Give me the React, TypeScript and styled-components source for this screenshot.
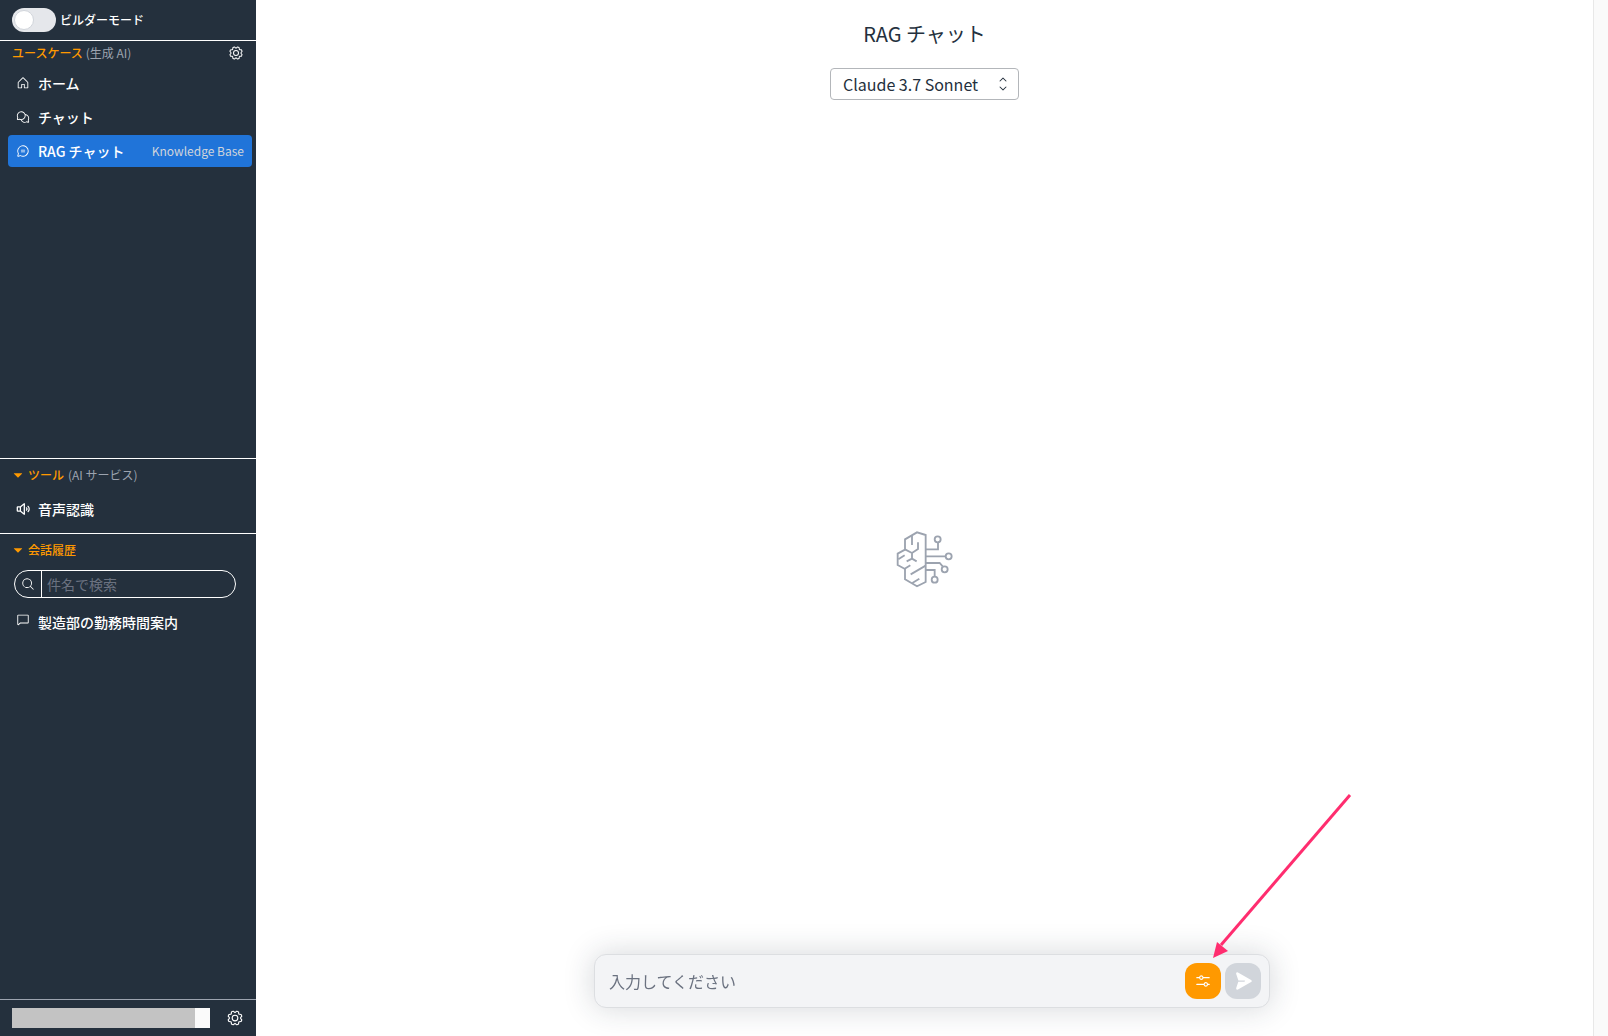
import React, { useState } from "react";
import styled, { createGlobalStyle } from "styled-components";
import {
  PiHouse,
  PiChatsCircle,
  PiChatCircleText,
  PiSpeakerHighBold,
  PiGear,
  PiMagnifyingGlass,
  PiChat,
  PiSlidersHorizontal,
  PiPaperPlaneRightFill,
  PiCaretUpDown,
  PiCaretDownFill,
} from "react-icons/pi";

const ink = "#24303d";
const orange = "#ff9900";
const sky = "#2074d9";
const muted = "#9ca3af";
const sidebarWidth = "256px";

const GlobalStyle = createGlobalStyle`
  *, *::before, *::after { box-sizing: border-box; }
  body {
    margin: 0;
    background: #fff;
    color: ${ink};
    font-family: "Noto Sans CJK JP", "Noto Sans", sans-serif;
    font-size: 16px;
    line-height: 24px;
  }
  button, input, select { font: inherit; color: inherit; }
  button { border: 0; padding: 0; background: none; cursor: pointer; }
  svg { display: block; flex: none; }
`;

const Page = styled.div`
  display: flex;
  height: 100vh;
  overflow: hidden;
`;

const Sidebar = styled.aside`
  display: flex;
  flex-direction: column;
  flex: 0 0 ${sidebarWidth};
  background: ${ink};
  color: #fff;
  font-size: 14px;
  line-height: 20px;
`;

const ModeBar = styled.label`
  display: flex;
  align-items: center;
  gap: 4px;
  height: 40px;
  padding: 0 12px;
  font-size: 12px;
  font-weight: 500;
  cursor: pointer;
`;

const Toggle = styled.input`
  appearance: none;
  display: flex;
  align-items: center;
  width: 44px;
  height: 24px;
  margin: 0;
  padding: 2px;
  border-radius: 12px;
  background: #e5e7eb;
  cursor: pointer;
  &::before {
    content: "";
    width: 20px;
    height: 20px;
    border: 1px solid #d1d5db;
    border-radius: 50%;
    background: #fff;
  }
  &:checked {
    justify-content: flex-end;
    background: ${orange};
  }
`;

const Section = styled.section<{ $grow?: number }>`
  display: flex;
  flex-direction: column;
  flex: ${(p) => (p.$grow ? `${p.$grow} 1 0` : "none")};
  min-height: 0;
  border-top: 1px solid #fff;
`;

const SectionTitle = styled.h2<{ $height: number }>`
  display: flex;
  align-items: center;
  gap: 3px;
  height: ${(p) => p.$height}px;
  margin: 0;
  padding: 0 12px;
  color: ${orange};
  font-size: 12px;
  font-weight: 500;
`;

const Fold = styled.button`
  display: flex;
  align-items: center;
  gap: 4px;
  color: ${orange};
`;

const Note = styled.small`
  color: ${muted};
  font-size: 12px;
  font-weight: 400;
`;

const IconButton = styled.button<{ $size: number }>`
  margin-left: auto;
  color: #fff;
  font-size: ${(p) => p.$size}px;
`;

const NavList = styled.ul`
  display: flex;
  flex-direction: column;
  gap: 2px;
  margin: 0;
  padding: 2px 4px 8px 8px;
  list-style: none;
`;

const NavLink = styled.a<{ $active?: boolean; $iconTop?: boolean }>`
  display: flex;
  align-items: center;
  height: 32px;
  padding: 6px 8px;
  border-radius: 4px;
  background: ${(p) => (p.$active ? sky : "transparent")};
  color: #fff;
  font-weight: 500;
  text-decoration: none;
  svg {
    align-self: ${(p) => (p.$iconTop ? "flex-start" : "center")};
    margin-right: 8px;
  }
`;

const Tag = styled.span`
  margin-left: auto;
  color: #d1d5db;
  font-size: 12px;
  font-weight: 400;
`;

const SearchBox = styled.label`
  display: flex;
  height: 28px;
  margin: 4px 20px 6px 14px;
  border: 1px solid #fff;
  border-radius: 14px;
  overflow: hidden;
`;

const SearchMark = styled.span`
  display: flex;
  align-items: center;
  justify-content: center;
  width: 27px;
  border-right: 1px solid #fff;
`;

const SearchInput = styled.input`
  flex: 1;
  min-width: 0;
  padding: 0 5px;
  border: 0;
  outline: 0;
  background: transparent;
  color: #fff;
  &::placeholder {
    color: #6b7280;
    opacity: 1;
  }
`;

const Account = styled.footer`
  display: flex;
  align-items: center;
  height: 37px;
  padding: 0 12px;
  border-top: 1px solid #9ca3af;
`;

const AccountName = styled.div`
  width: 198px;
  height: 20px;
  border-right: 15px solid #fafafa;
  background: #c3c3c3;
`;

const Main = styled.main`
  display: flex;
  flex: 1;
  min-width: 0;
`;

const Conversation = styled.div`
  display: flex;
  flex-direction: column;
  align-items: center;
  flex: 1;
`;

const Title = styled.h1`
  margin: 20px 0;
  font-size: 20px;
  font-weight: 400;
  line-height: 28px;
`;

const ModelPicker = styled.div`
  display: grid;
  align-items: center;
  width: 189px;
  height: 32px;
  > * {
    grid-area: 1 / 1;
  }
  svg {
    justify-self: end;
    margin-right: 8px;
    pointer-events: none;
  }
`;

const ModelSelect = styled.select`
  appearance: none;
  height: 32px;
  padding: 0 32px 0 12px;
  border: 1px solid #b3b6ba;
  border-radius: 4px;
  background: #fff;
`;

const Empty = styled.div`
  display: flex;
  flex: 1;
  align-items: center;
  justify-content: center;
  padding-bottom: 18px;
`;

const ScrollTrack = styled.div`
  width: 15px;
  border-left: 1px solid #e8e8e8;
  background: #fafafa;
`;

const ComposerDock = styled.div`
  position: fixed;
  left: ${sidebarWidth};
  right: 0;
  bottom: 28px;
  display: flex;
  justify-content: center;
`;

const Composer = styled.form`
  display: flex;
  align-items: center;
  gap: 4px;
  width: 50%;
  height: 54px;
  padding: 0 8px 0 14px;
  border: 1px solid #dcdee1;
  border-radius: 12px;
  background: #f3f4f6;
  box-shadow: 0 0 30px 1px rgba(35, 47, 62, 0.18);
`;

const Prompt = styled.input`
  flex: 1;
  min-width: 0;
  padding: 0;
  border: 0;
  outline: 0;
  background: transparent;
  &::placeholder {
    color: #6b7280;
    opacity: 1;
  }
`;

const ActionButton = styled.button<{ $tone: string; $icon: number }>`
  display: flex;
  align-items: center;
  justify-content: center;
  width: 36px;
  height: 36px;
  border-radius: 12px;
  background: ${(p) => p.$tone};
  color: #fff;
  font-size: ${(p) => p.$icon}px;
`;

const Pointer = styled.svg`
  position: fixed;
  right: 255px;
  bottom: 76px;
  pointer-events: none;
`;

const BrainCircuit = () => (
  <svg width="59" height="57" viewBox="46 62 177 171" fill="none" stroke="#9ca3af" strokeWidth="5.5">
    <path d="M138 74 112 66 76 87v31L54 130v34l22 12v31l36 21 26-13z" />
    <path d="M97 76v28M115 96v20l-18 12-21-11M97 128v17l-16 8M97 145l14 8M56 147l19-12M74 176l18-11M93 192l45-26M98 218l21-13" />
    <path d="M138 117h37V97M138 138h58M138 158h42l9 10M138 179h27v18" />
    <circle cx="174" cy="87" r="9" />
    <circle cx="207" cy="138" r="9" />
    <circle cx="195" cy="177" r="9" />
    <circle cx="165" cy="208" r="9" />
  </svg>
);

export default function App() {
  const [builder, setBuilder] = useState(false);
  return (
    <>
      <GlobalStyle />
      <Page>
        <Sidebar>
          <ModeBar>
            <Toggle type="checkbox" checked={builder} onChange={() => setBuilder(!builder)} />
            ビルダーモード
          </ModeBar>
          <Section $grow={417}>
            <SectionTitle $height={24}>
              ユースケース <Note>(生成 AI)</Note>
              <IconButton $size={16} aria-label="ユースケース設定">
                <PiGear />
              </IconButton>
            </SectionTitle>
            <NavList>
              <li>
                <NavLink href="#home">
                  <PiHouse />
                  ホーム
                </NavLink>
              </li>
              <li>
                <NavLink href="#chat">
                  <PiChatsCircle />
                  チャット
                </NavLink>
              </li>
              <li>
                <NavLink href="#rag" $active aria-current="page">
                  <PiChatCircleText />
                  RAG チャット
                  <Tag>Knowledge Base</Tag>
                </NavLink>
              </li>
            </NavList>
          </Section>
          <Section>
            <SectionTitle $height={32}>
              <Fold>
                <PiCaretDownFill size={12} />
                ツール <Note>(AI サービス)</Note>
              </Fold>
            </SectionTitle>
            <NavList>
              <li>
                <NavLink href="#transcribe">
                  <PiSpeakerHighBold />
                  音声認識
                </NavLink>
              </li>
            </NavList>
          </Section>
          <Section $grow={466}>
            <SectionTitle $height={32}>
              <Fold>
                <PiCaretDownFill size={12} />
                会話履歴
              </Fold>
            </SectionTitle>
            <SearchBox>
              <SearchMark>
                <PiMagnifyingGlass />
              </SearchMark>
              <SearchInput type="text" placeholder="件名で検索" aria-label="件名で検索" />
            </SearchBox>
            <NavList>
              <li>
                <NavLink href="#history" $iconTop>
                  <PiChat />
                  製造部の勤務時間案内
                </NavLink>
              </li>
            </NavList>
          </Section>
          <Account>
            <AccountName />
            <IconButton $size={18} aria-label="設定">
              <PiGear />
            </IconButton>
          </Account>
        </Sidebar>

        <Main>
          <Conversation>
            <Title>RAG チャット</Title>
            <ModelPicker>
              <ModelSelect aria-label="モデル" defaultValue="sonnet">
                <option value="sonnet">Claude 3.7 Sonnet</option>
              </ModelSelect>
              <PiCaretUpDown />
            </ModelPicker>
            <Empty>
              <BrainCircuit />
            </Empty>
          </Conversation>
          <ScrollTrack />
        </Main>
      </Page>

      <ComposerDock>
        <Composer onSubmit={(e) => e.preventDefault()}>
          <Prompt type="text" placeholder="入力してください" aria-label="入力してください" />
          <ActionButton type="button" $tone={orange} $icon={18} aria-label="詳細設定">
            <PiSlidersHorizontal />
          </ActionButton>
          <ActionButton type="submit" $tone="#d1d5db" $icon={20} aria-label="送信">
            <PiPaperPlaneRightFill />
          </ActionButton>
        </Composer>
      </ComposerDock>

      <Pointer width="142" height="168" viewBox="0 0 142 168" aria-hidden="true">
        <path d="M139 3 10 153" stroke="#ff2d6f" strokeWidth="3" />
        <path d="M2 166 6 150 17 159z" fill="#ff2d6f" />
      </Pointer>
    </>
  );
}
